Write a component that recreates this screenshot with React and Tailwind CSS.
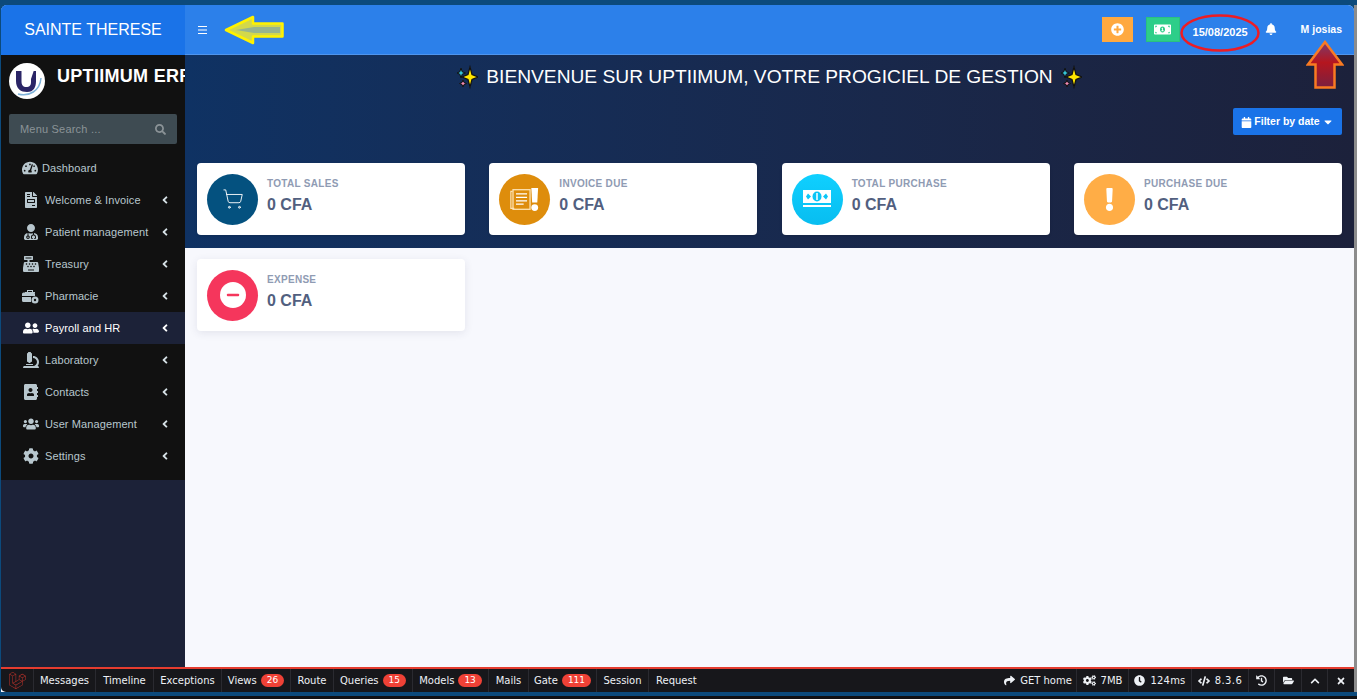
import React from "react";
import { FaTachometerAlt, FaFileInvoice, FaUserMd, FaCashRegister, FaUserFriends, FaMicroscope, FaAddressBook, FaUsers, FaCog, FaAngleLeft, FaSearch, FaBell, FaCalendar, FaCaretDown, FaMoneyBillAlt, FaPlusCircle, FaLaravel, FaShare, FaCogs, FaClock, FaCode, FaHistory, FaFolderOpen, FaChevronUp, FaTimes, FaExclamation, FaMinus } from "react-icons/fa";
import { ShoppingCart } from "lucide-react";

const Sparkle = () => (
  <svg width="21" height="24" viewBox="0 0 21 24" className="shrink-0">
    <path d="M13 2 L15 9.500 L21 12 L15 14.500 L13 22 L11 14.500 L5 12 L11 9.500 Z" fill="#ffe600" stroke="#111" strokeWidth="1.200" />
    <path d="M4 3 L5.200 6.800 L8.500 8 L5.200 9.200 L4 13 L2.800 9.200 L0 8 L2.800 6.800 Z" fill="#35c3d8" stroke="#111" strokeWidth="1" />
    <path d="M6 15 L7 17.500 L9.500 18.500 L7 19.500 L6 22 L5 19.500 L2.500 18.500 L5 17.500 Z" fill="#f08ab4" stroke="#111" strokeWidth="1" />
  </svg>
);

const ToolboxIcon = ({ size = 16 }) => (
  <svg width={size + 1} height={size - 1} viewBox="0 0 17 15" fill="currentColor">
    <path d="M5 1h6v2h2v1H3V3h2V1Zm1 1v1h4V2H6Z" fillRule="evenodd" />
    <path d="M0 5a1.500 1.500 0 0 1 1.500-1.500h10A1.500 1.500 0 0 1 13 5v2H0V5Zm0 3h9v5H1.500A1.500 1.500 0 0 1 0 11.500V8Z" />
    <circle cx="13" cy="11" r="3.500" />
    <circle cx="13" cy="11" r="1.200" fill="#111111" />
  </svg>
);

const menu = [
  [FaFileInvoice, "Welcome & Invoice"],
  [FaUserMd, "Patient management"],
  [FaCashRegister, "Treasury"],
  [ToolboxIcon, "Pharmacie"],
  [FaUserFriends, "Payroll and HR", true],
  [FaMicroscope, "Laboratory"],
  [FaAddressBook, "Contacts"],
  [FaUsers, "User Management"],
  [FaCog, "Settings"],
];

const InvoiceIcon = () => (
  <svg width="29" height="23" viewBox="0 0 34 27" fill="none">
    <path d="M3 4 H1 V24 H5" stroke="#fde3b5" strokeWidth="1.400" />
    <rect x="3.500" y="2" width="20" height="23" stroke="#fde3b5" strokeWidth="1.500" />
    <path d="M7 7h13M7 11h13M7 15h13M7 19h9" stroke="#fff" strokeWidth="1.500" />
    <path d="M25 0 H33 L32 17 H26 Z" fill="#fff" />
    <circle cx="29" cy="23" r="4" fill="#fff" />
  </svg>
);

const BillIcon = () => (
  <svg width="28" height="18" viewBox="0 0 28 18">
    <path d="M0 0h28v13H0Z" fill="#fff" />
    <rect x="2.500" y="2.500" width="23" height="8" fill="#fff" />
    <ellipse cx="14" cy="6.500" rx="4.500" ry="5" fill="#0bc6f7" />
    <path d="M14 3v7" stroke="#fff" strokeWidth="1.500" />
    <path d="M5 3.500 8 6.500 5 9.500 3 6.500Z M23 3.500 20 6.500 23 9.500 25 6.500Z" fill="#0bc6f7" />
    <rect y="15" width="28" height="2" fill="#fff" />
  </svg>
);

const cards = [
  ["TOTAL SALES", "bg-[#04517f]", <ShoppingCart size={22} strokeWidth={1} className="text-white" />],
  ["INVOICE DUE", "bg-[#de8d0c]", <InvoiceIcon />],
  ["TOTAL PURCHASE", "bg-linear-to-b from-[#0fd0ff] to-[#08bdf0]", <BillIcon />],
  ["PURCHASE DUE", "bg-[#ffad46]", <FaExclamation size={23} className="text-white" />],
];

const Card = ({ title, color, icon, shadow = "" }) => (
  <div className={`h-[72px] bg-white rounded-[4px] flex items-center pl-[10px] ${shadow}`}>
    <div className={`w-[51px] h-[51px] rounded-full flex items-center justify-center shrink-0 ${color}`}>{icon}</div>
    <div className="ml-[9px] -mt-[5px]">
      <div className="text-[10px] leading-[12px] font-bold text-[#8f9bb3] tracking-[0.3px]">{title}</div>
      <div className="text-[16px] leading-[20px] mt-[5px] font-bold text-[#525f7f]">0 CFA</div>
    </div>
  </div>
);

const DebugTab = ({ label, badge, w }) => (
  <div className="h-full flex items-center justify-center border-r border-[#2a2a30] shrink-0" style={{ width: w }}>
    <span>{label}</span>
    {badge && <span className="ml-[4px] h-[13px] px-[6px] rounded-full bg-[#ef4136] text-white text-[9px] leading-[13px]">{badge}</span>}
  </div>
);

const DebugRight = ({ children, w, last }) => (
  <div className={`h-full flex items-center justify-center gap-[5px] shrink-0 ${last ? "" : "border-r border-[#2a2a30]"}`} style={{ width: w }}>{children}</div>
);

export default function App() {
  return (
    <div className="w-[1357px] h-[699px] overflow-hidden bg-[#0c4a7c] pt-[5px] flex flex-col font-['Liberation_Sans',Arial,sans-serif] relative">
      <div className="flex-1 min-h-0 flex">
        <div className="flex-1 min-w-0 ml-[1px] flex flex-col rounded-t-[6px] overflow-hidden bg-[#f7f8fd]">
          <header className="h-[50px] flex shrink-0 bg-[#2c80ea] border-b border-[#4f95ee]">
            <div className="w-[184px] h-[50px] bg-[#1a73e8] text-white text-[16px] flex items-center justify-center">SAINTE THERESE</div>
            <div className="flex-1 flex items-center text-white">
              <svg width="9" height="8" viewBox="0 0 9 8" className="ml-[13px]"><path d="M0 .5h9M0 4h9M0 7.500h9" stroke="#fff" strokeWidth="1" /></svg>
              <div className="flex-1" />
              <div className="w-[31px] h-[25px] bg-[#ffa940] flex items-center justify-center -mt-[1px]"><FaPlusCircle size={13} /></div>
              <div className="w-[34px] h-[25px] bg-[#2dce89] flex items-center justify-center ml-[13px] -mt-[1px] border border-[#2bc07f]"><FaMoneyBillAlt size={17} /></div>
              <div className="ml-[13px] text-[11px] font-bold w-[56px] mt-[6px]">15/08/2025</div>
              <FaBell size={12} className="ml-[16px] -mt-[1px]" />
              <div className="ml-[24px] mr-[12px] text-[10.5px] font-bold">M josias</div>
            </div>
          </header>
          <div className="flex-1 min-h-0 flex">
            <aside className="w-[184px] shrink-0 bg-[#1c2238] overflow-hidden">
              <div className="bg-[#111111] h-[425px]">
                <div className="h-[59px] flex items-start pl-[8px] pt-[8px] overflow-hidden whitespace-nowrap">
                  <svg width="36" height="36" viewBox="0 0 36 36" className="shrink-0">
                    <circle cx="18" cy="18" r="18" fill="#fff" />
                    <path d="M7 8 V18 C7 26 12 29 18 29 C25 29 27 24 27 18 L27 8 L22 8 L22 19 C22 23 20 24 17.500 24 C14 24 12.500 22 12.500 18 V8 Z" fill="#2b2566" />
                    <path d="M21 4 L26 4 L21 19 Z" fill="#fff" />
                    <path d="M9 31 C20 34 31 28 32 15" fill="none" stroke="#7fb2d9" strokeWidth="1.500" />
                  </svg>
                  <span className="ml-[12px] mt-[4px] text-white text-[18px] leading-[18px] font-bold tracking-[0.3px]">UPTIIMUM ERP</span>
                </div>
                <div className="mx-[8px] h-[30px] bg-[#3e4b52] rounded-[2px] flex items-center justify-between px-[11px] text-[#8b9397] text-[11px] tracking-[0.2px]">
                  <span>Menu Search ...</span>
                  <FaSearch size={11} />
                </div>
                <nav className="mt-[8px] text-[11px] tracking-[0.1px]">
                  <div className="h-[32px] flex items-center pl-[21px] text-[#b8c7ce]">
                    <FaTachometerAlt size={16} className="shrink-0" />
                    <span className="ml-[4px]">Dashboard</span>
                  </div>
                  {menu.map(([Icon, label, active]) => (
                    <div key={label} className={`h-[32px] flex items-center pl-[21px] pr-[14px] ${active ? "bg-[#1c2238] text-white" : "text-[#b8c7ce]"}`}>
                      <span className="w-[17px] flex justify-center shrink-0"><Icon size={16} /></span>
                      <span className="ml-[6px] flex-1 whitespace-nowrap">{label}</span>
                      <FaAngleLeft size={12} className={active ? "text-white" : "text-[#d5e0e5]"} />
                    </div>
                  ))}
                </nav>
              </div>
            </aside>
            <main className="flex-1 min-w-0">
              <section className="h-[193px] bg-linear-to-r from-[#0f3263] to-[#1c213b] px-[12px]">
                <div className="h-[44px] flex items-center justify-center gap-[8px] text-white text-[19.2px]">
                  <Sparkle />
                  <span>BIENVENUE SUR UPTIIMUM, VOTRE PROGICIEL DE GESTION</span>
                  <Sparkle />
                </div>
                <div className="flex justify-end mt-[9px]">
                  <div className="w-[109px] h-[27px] pt-[1px] bg-[#1a73e8] rounded-[2px] text-white text-[10.5px] font-bold flex items-center justify-center gap-[2px]">
                    <FaCalendar size={11} />
                    <span>Filter by date</span>
                    <FaCaretDown size={12} />
                  </div>
                </div>
                <div className="grid grid-cols-4 gap-x-[24.3px] mt-[28px]">
                  {cards.map(([t, c, i]) => <Card key={t} title={t} color={c} icon={i} shadow="shadow-sm" />)}
                </div>
              </section>
              <div className="px-[12px] pt-[11px] grid grid-cols-4 gap-x-[24.3px]">
                <Card
                  title="EXPENSE"
                  color="bg-[#f5365c]"
                  shadow="shadow-[0_2px_8px_rgba(50,50,93,0.1)]"
                  icon={<div className="w-[26px] h-[26px] rounded-full bg-white flex items-center justify-center"><FaMinus size={14} className="text-[#f5365c]" /></div>}
                />
              </div>
            </main>
          </div>
          <footer className="h-[25px] shrink-0 bg-[#17171b] border-t-2 border-[#e53c2f] flex items-center text-[#eef1f5] text-[10px] font-['DejaVu_Sans',sans-serif] rounded-bl-[5px]">
            <div className="w-[33px] h-full flex items-center justify-center border-r border-[#2a2a30] shrink-0"><FaLaravel size={17} className="text-[#b8322a]" /></div>
            <DebugTab label="Messages" w={62} />
            <DebugTab label="Timeline" w={58} />
            <DebugTab label="Exceptions" w={68} />
            <DebugTab label="Views" badge="26" w={69} />
            <DebugTab label="Route" w={43} />
            <DebugTab label="Queries" badge="15" w={79} />
            <DebugTab label="Models" badge="13" w={76} />
            <DebugTab label="Mails" w={40} />
            <DebugTab label="Gate" badge="111" w={68} />
            <DebugTab label="Session" w={52} />
            <div className="h-full flex items-center pl-[7px]">Request</div>
            <div className="flex-1" />
            <DebugRight w={77}><FaShare size={11} /><span>GET home</span></DebugRight>
            <DebugRight w={52}><FaCogs size={13} /><span>7MB</span></DebugRight>
            <DebugRight w={63}><FaClock size={11} /><span className="tracking-[0.2px]">124ms</span></DebugRight>
            <DebugRight w={57}><FaCode size={12} /><span className="tracking-[0.4px]">8.3.6</span></DebugRight>
            <DebugRight w={26}><FaHistory size={11} /></DebugRight>
            <DebugRight w={27}><FaFolderOpen size={11} /></DebugRight>
            <DebugRight w={26}><FaChevronUp size={10} /></DebugRight>
            <DebugRight w={26} last><FaTimes size={10} /></DebugRight>
          </footer>
        </div>
        <div className="w-[3px] shrink-0 bg-[#8c8c8c]" />
      </div>
      <div className="h-[7px] shrink-0 flex flex-col">
        <div className="h-[4px] bg-[#0c4a7c]" />
        <div className="h-[3px] bg-[#111114]" />
      </div>
      <svg width="60" height="30" viewBox="0 0 60 30" className="absolute left-[224px] top-[15px]">
        <path d="M2 15 L29 2 V8.500 H58.500 V21.500 H29 V28 Z" fill="#d3d84a" stroke="#fff200" strokeWidth="2.500" strokeLinejoin="round" />
        <path d="M12 15 L30 12 H56 V18 H30 Z" fill="#6f9fbc" opacity=".6" />
      </svg>
      <svg width="82" height="40" viewBox="0 0 82 40" className="absolute left-[1179px] top-[13px]">
        <ellipse cx="41" cy="20" rx="38.500" ry="17.500" fill="none" stroke="#ed1c24" strokeWidth="2.500" />
      </svg>
      <svg width="38" height="50" viewBox="0 0 38 50" className="absolute left-[1306px] top-[40px]">
        <defs>
          <linearGradient id="redArrow" x1="0" y1="0" x2="0" y2="1">
            <stop offset="0" stopColor="#7b3b6c" />
            <stop offset=".45" stopColor="#b5161f" />
            <stop offset="1" stopColor="#7a2040" />
          </linearGradient>
        </defs>
        <path d="M19 2 L36 24.500 H28.500 V47.500 H9.500 V24.500 H2 Z" fill="url(#redArrow)" stroke="#f97a22" strokeWidth="2.500" strokeLinejoin="miter" />
      </svg>
    </div>
  );
}
